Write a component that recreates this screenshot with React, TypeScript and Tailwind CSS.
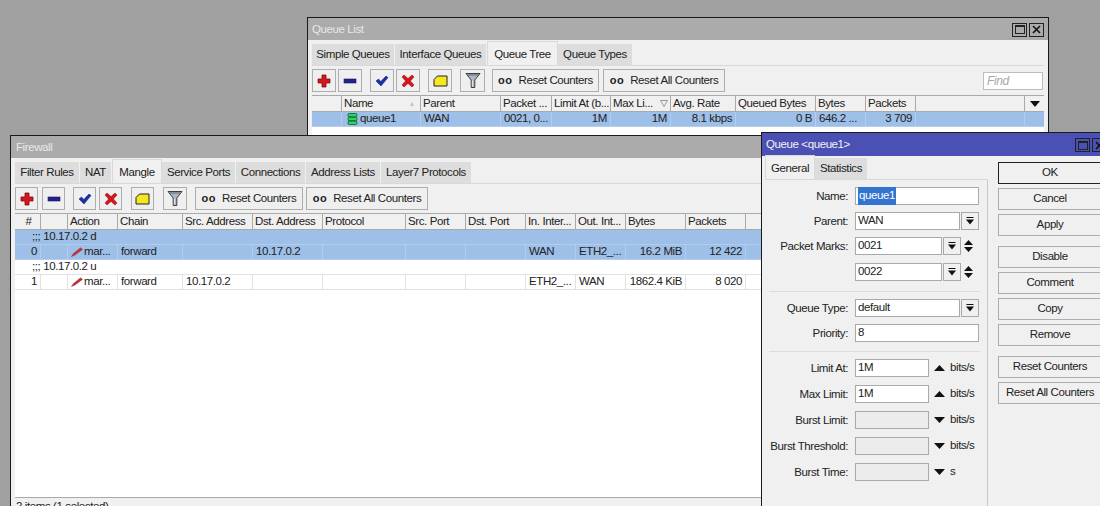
import type { ReactNode } from "react"

type Col = { w: number; label?: string; right?: boolean; center?: boolean }

const font = { fontFamily: '"Liberation Sans", Arial, sans-serif' }

function PlusIcon() {
  return (
    <svg width="14" height="14" viewBox="0 0 14 14">
      <path d="M5 1h4v4h4v4H9v4H5V9H1V5h4z" fill="#d8141c" stroke="#7a1015" strokeWidth="0.8" />
    </svg>
  )
}

function MinusIcon() {
  return (
    <svg width="14" height="14" viewBox="0 0 14 14">
      <rect x="1" y="5" width="12" height="4" fill="#23238e" stroke="#15155c" strokeWidth="0.6" />
    </svg>
  )
}

function CheckIcon() {
  return (
    <svg width="14" height="14" viewBox="0 0 14 14">
      <path d="M1 7l2.5-2 2.3 2.4L11 2l2 1.6L6 12z" fill="#1c2ea8" stroke="#101a66" strokeWidth="0.5" />
    </svg>
  )
}

function CrossIcon() {
  return (
    <svg width="14" height="14" viewBox="0 0 14 14">
      <path d="M1 3l2-2 4 3.6L11 1l2 2-3.6 4 3.6 4-2 2-4-3.6L3 13l-2-2 3.6-4z" fill="#d8141c" stroke="#7a1015" strokeWidth="0.5" />
    </svg>
  )
}

function NoteIcon() {
  return (
    <svg width="15" height="12" viewBox="0 0 15 12">
      <path d="M4.5 1h9.5v10H1V4.5z" fill="#f6e81e" stroke="#222" strokeWidth="1" />
    </svg>
  )
}

function FilterIcon() {
  return (
    <svg width="16" height="17" viewBox="0 0 16 17">
      <path d="M1 1.5h14L9.8 8v7.5H6.2V8z" fill="#aeb8c2" stroke="#3c3c3c" strokeWidth="1" />
      <path d="M3 3h10" stroke="#6f7c88" strokeWidth="1.4" />
      <path d="M7.4 8.5v6" stroke="#e4e8ec" strokeWidth="1" />
    </svg>
  )
}

function QueueIcon() {
  return (
    <svg width="11" height="12" viewBox="0 0 11 12" className="shrink-0">
      <rect x="1" y="0.5" width="9" height="3.4" rx="1.2" fill="#2fd368" stroke="#0b5a2a" strokeWidth="0.8" />
      <rect x="1" y="4.3" width="9" height="3.4" rx="1.2" fill="#2fd368" stroke="#0b5a2a" strokeWidth="0.8" />
      <rect x="1" y="8.1" width="9" height="3.4" rx="1.2" fill="#2fd368" stroke="#0b5a2a" strokeWidth="0.8" />
    </svg>
  )
}

function MarkIcon() {
  return (
    <svg width="12" height="10" viewBox="0 0 12 10" className="shrink-0">
      <path d="M0.5 9.5l2-3L9.5 0.8l2 1.6L4 8z" fill="#c8323c" stroke="#7a1a20" strokeWidth="0.4" />
    </svg>
  )
}

function ToolBtn({ w, ml = 0, children }: { w: number; ml?: number; children: ReactNode }) {
  return (
    <div
      className="flex h-[23px] shrink-0 items-center justify-center border border-[#adadad] bg-[#efefef] text-[11.5px] text-[#222]"
      style={{ width: w, marginLeft: ml }}
    >
      {children}
    </div>
  )
}

function ResetLabel({ text }: { text: string }) {
  return (
    <span className="flex items-center gap-[6px]">
      <b className="text-[11px] leading-none tracking-[0.5px]">oo</b>
      {text}
    </span>
  )
}

function Toolbar({ btn, gaps, resetW, resetAllW, children }: { btn: number; gaps: number[]; resetW: number; resetAllW: number; children?: ReactNode }) {
  return (
    <div className="flex h-[29px] items-center">
      <ToolBtn w={btn}><PlusIcon /></ToolBtn>
      <ToolBtn w={btn} ml={gaps[0]}><MinusIcon /></ToolBtn>
      <ToolBtn w={btn} ml={gaps[1]}><CheckIcon /></ToolBtn>
      <ToolBtn w={btn} ml={gaps[2]}><CrossIcon /></ToolBtn>
      <ToolBtn w={btn} ml={gaps[3]}><NoteIcon /></ToolBtn>
      <ToolBtn w={btn + 1} ml={gaps[4]}><FilterIcon /></ToolBtn>
      <ToolBtn w={resetW} ml={gaps[5]}><ResetLabel text="Reset Counters" /></ToolBtn>
      <ToolBtn w={resetAllW} ml={gaps[6]}><ResetLabel text="Reset All Counters" /></ToolBtn>
      {children}
    </div>
  )
}

function Tabs({ tabs, active, ml = 0 }: { tabs: [string, number][]; active: string; ml?: number }) {
  return (
    <div className="flex h-[24px] items-end border-b border-[#d9d9d9]" style={{ marginLeft: ml }}>
      {tabs.map(([name, w]) =>
        name === active ? (
          <div
            key={name}
            className="flex h-[24px] items-start justify-center border-x border-t border-[#d9d9d9] bg-[#f0f0f0] pt-[4px] text-[11.5px] text-[#222]"
            style={{ width: w }}
          >
            {name}
          </div>
        ) : (
          <div
            key={name}
            className="mr-[1px] flex h-[21px] items-center justify-center bg-[#dddddd] text-[11.5px] text-[#222]"
            style={{ width: w }}
          >
            {name}
          </div>
        ),
      )}
    </div>
  )
}

function HeaderCell({ col, children }: { col: Col; children?: ReactNode }) {
  return (
    <div
      className={`relative flex h-full shrink-0 items-center whitespace-nowrap border-r border-[#a9a9a9] pl-[2px] text-[11.5px] text-[#222] ${col.center ? "justify-center" : ""}`}
      style={{ width: col.w }}
    >
      {col.label}
      {children}
    </div>
  )
}

function Cell({ col, children, selected }: { col: Col; children?: ReactNode; selected?: boolean }) {
  return (
    <div
      className={`flex h-full shrink-0 items-center whitespace-nowrap border-r px-[3px] text-[11.5px] text-[#222] ${col.right ? "justify-end" : ""} ${selected ? "border-[#b4cdea]" : "border-[#e2e2e2]"}`}
      style={{ width: col.w }}
    >
      {children}
    </div>
  )
}

function Row({ cols, cells, selected }: { cols: Col[]; cells: ReactNode[]; selected?: boolean }) {
  return (
    <div className={`flex h-[15px] border-b ${selected ? "border-[#b4cdea] bg-[#9dbfe8]" : "border-[#e2e2e2] bg-white"}`}>
      {cols.map((c, i) => (
        <Cell key={i} col={c} selected={selected}>{cells[i]}</Cell>
      ))}
    </div>
  )
}

function CommentRow({ text, selected }: { text: string; selected?: boolean }) {
  return (
    <div className={`flex h-[15px] items-center border-b pl-[17px] text-[11.5px] text-[#222] ${selected ? "border-[#b4cdea] bg-[#9dbfe8]" : "border-[#e2e2e2] bg-white"}`}>
      {text}
    </div>
  )
}

function WinButtons() {
  return (
    <div className="flex items-center gap-[2px]">
      <div className="flex h-[14px] w-[15px] items-center justify-center border border-[#222]">
        <div className="h-[9px] w-[10px] border border-t-2 border-[#222]" />
      </div>
      <div className="flex h-[14px] w-[15px] items-center justify-center border border-[#222]">
        <svg width="9" height="9" viewBox="0 0 9 9">
          <path d="M1 1l7 7M8 1l-7 7" stroke="#111" strokeWidth="1.6" />
        </svg>
      </div>
    </div>
  )
}

const queueCols: Col[] = [
  { w: 30 }, { w: 79, label: "Name" }, { w: 80, label: "Parent" }, { w: 51, label: "Packet ..." },
  { w: 59, label: "Limit At (b...", right: true }, { w: 60, label: "Max Li...", right: true }, { w: 65, label: "Avg. Rate", right: true },
  { w: 80, label: "Queued Bytes", right: true }, { w: 50, label: "Bytes" }, { w: 50, label: "Packets", right: true }, { w: 109 },
]

const fwCols: Col[] = [
  { w: 26, label: "#", right: true, center: true }, { w: 27 }, { w: 50, label: "Action" }, { w: 65, label: "Chain" },
  { w: 70, label: "Src. Address" }, { w: 70, label: "Dst. Address" }, { w: 83, label: "Protocol" }, { w: 60, label: "Src. Port" },
  { w: 60, label: "Dst. Port" }, { w: 50, label: "In. Inter..." }, { w: 50, label: "Out. Int..." },
  { w: 60, label: "Bytes", right: true }, { w: 60, label: "Packets", right: true },
]

function QueueList() {
  return (
    <div className="absolute left-[307px] top-[17px] flex h-[130px] w-[742px] flex-col border border-[#1a1a1a] bg-[#f0f0f0]">
      <div className="flex h-[22px] items-center justify-between bg-[#ababab] pl-[4px] pr-[4px] pt-[1px] text-[11.5px] text-[#e8e8e8]">
        Queue List
        <WinButtons />
      </div>
      <div className="flex flex-1 flex-col px-[4px] pt-[2px]">
        <Tabs
          tabs={[["Simple Queues", 82], ["Interface Queues", 91], ["Queue Tree", 71], ["Queue Types", 74]]}
          active="Queue Tree"
        />
        <Toolbar btn={24} gaps={[2, 8, 2, 8, 8, 7, 4]} resetW={107} resetAllW={122}>
          <div className="ml-auto mr-[1px] flex h-[18px] w-[60px] items-center border border-[#bdbdbd] bg-white px-[3px] text-[12px] italic text-[#a8a8a8]">
            Find
          </div>
        </Toolbar>
        <div className="flex h-[17px] border-y border-[#a9a9a9] bg-[#f0f0f0]">
          {queueCols.map((c, i) => (
            <HeaderCell key={i} col={c}>
              {c.label === "Name" && <span className="absolute right-[5px] top-[3px] text-[7px] text-[#c4c4c4]">▲</span>}
              {c.label === "Max Li..." && (
                <svg width="8" height="7" viewBox="0 0 8 7" className="absolute right-[2px] top-[4px]">
                  <path d="M0.5 0.5h7L4 6.5z" fill="none" stroke="#999" />
                </svg>
              )}
            </HeaderCell>
          ))}
          <div className="relative flex-1">
            <svg width="10" height="6" viewBox="0 0 10 6" className="absolute right-[4px] top-[5px]">
              <path d="M0 0h10L5 6z" fill="#111" />
            </svg>
          </div>
        </div>
        <Row
          selected
          cols={queueCols}
          cells={[
            null,
            <span className="flex items-center gap-[2px] pl-[2px]"><QueueIcon />queue1</span>,
            "WAN", "0021, 0...", "1M", "1M", "8.1 kbps", "0 B", "646.2 ...", "3 709", null,
          ]}
        />
        <div className="flex-1 bg-white" />
      </div>
    </div>
  )
}

function Firewall() {
  return (
    <div className="absolute left-[10px] top-[135px] flex h-[380px] w-[760px] flex-col border border-[#1a1a1a] bg-[#f0f0f0]">
      <div className="flex h-[22px] items-center bg-[#ababab] pl-[5px] pt-[1px] text-[11.5px] text-[#e8e8e8]">Firewall</div>
      <div className="flex flex-1 flex-col pl-[4px] pt-[2px]">
        <Tabs
          tabs={[["Filter Rules", 64], ["NAT", 31], ["Mangle", 50], ["Service Ports", 73], ["Connections", 69], ["Address Lists", 74], ["Layer7 Protocols", 90]]}
          active="Mangle"
        />
        <Toolbar btn={23} gaps={[4, 8, 3, 9, 9, 8, 3]} resetW={108} resetAllW={122} />
        <div className="flex h-[17px] border-y border-[#a9a9a9] bg-[#f0f0f0]">
          {fwCols.map((c, i) => (
            <HeaderCell key={i} col={c} />
          ))}
        </div>
        <div className="flex flex-1 flex-col bg-white">
          <CommentRow selected text=";;; 10.17.0.2 d" />
          <Row
            selected
            cols={fwCols}
            cells={["0", null, <span className="flex items-center gap-[1px]"><MarkIcon />mar...</span>, "forward", null, "10.17.0.2", null, null, null, "WAN", "ETH2_...", "16.2 MiB", "12 422"]}
          />
          <CommentRow text=";;; 10.17.0.2 u" />
          <Row
            cols={fwCols}
            cells={["1", null, <span className="flex items-center gap-[1px]"><MarkIcon />mar...</span>, "forward", "10.17.0.2", null, null, null, null, "ETH2_...", "WAN", "1862.4 KiB", "8 020"]}
          />
        </div>
        <div className="h-[17px] border-t border-[#a9a9a9] pl-[1px] text-[11.5px] text-[#222]">2 items (1 selected)</div>
      </div>
    </div>
  )
}

function FormRow({ label, children }: { label?: string; children: ReactNode }) {
  return (
    <div className="flex h-[18px] items-center text-[11.5px] text-[#222]">
      <div className="w-[85px] shrink-0 whitespace-nowrap pr-[7px] pt-[1px] text-right">{label ? `${label}:` : ""}</div>
      {children}
    </div>
  )
}

function Input({ w, value, disabled, children }: { w: number; value?: string; disabled?: boolean; children?: ReactNode }) {
  return (
    <div
      className={`flex h-[18px] shrink-0 items-center border border-[#a9a9a9] pl-[2px] text-[11.5px] ${disabled ? "bg-[#ececec]" : "bg-white"}`}
      style={{ width: w }}
    >
      {value}
      {children}
    </div>
  )
}

function DropBtn() {
  return (
    <div className="ml-[1px] flex h-[18px] w-[18px] shrink-0 items-center justify-center border border-[#a9a9a9] bg-[#f0f0f0]">
      <svg width="8" height="8" viewBox="0 0 8 8">
        <path d="M0.5 0.5h7" stroke="#111" />
        <path d="M0 2.5h8L4 7.5z" fill="#111" />
      </svg>
    </div>
  )
}

function UpDown() {
  return (
    <svg width="9" height="12" viewBox="0 0 9 12" className="ml-[3px] shrink-0">
      <path d="M4.5 0L9 5H0zM0 7h9l-4.5 5z" fill="#111" />
    </svg>
  )
}

function Unit({ up, text }: { up?: boolean; text: string }) {
  return (
    <span className="ml-[5px] flex items-center gap-[5px]">
      <svg width="11" height="6" viewBox="0 0 11 6">
        <path d={up ? "M5.5 0L11 6H0z" : "M0 0h11L5.5 6z"} fill="#111" />
      </svg>
      {text}
    </span>
  )
}

function Separator() {
  return <div className="ml-[7px] mr-[7px] h-px bg-[#dcdcdc]" />
}

function DlgButton({ text, mt = 4, focus }: { text: string; mt?: number; focus?: boolean }) {
  return (
    <div
      className={`flex h-[22px] w-[104px] items-center justify-center whitespace-nowrap border bg-[#f0f0f0] text-[11.5px] text-[#222] ${focus ? "border-[#222]" : "border-[#adadad]"}`}
      style={{ marginTop: mt }}
    >
      {text}
    </div>
  )
}

function QueueDialog() {
  return (
    <div className="absolute left-[761px] top-[132px] flex h-[380px] w-[347px] flex-col border border-[#1a1a1a] bg-[#f0f0f0]">
      <div className="flex h-[23px] items-center justify-between bg-[#4b50b4] pl-[4px] pt-[1px] text-[11.5px] text-[#f2f2f2]">
        {"Queue <queue1>"}
        <WinButtons />
      </div>
      <div className="flex flex-1">
        <div className="flex w-[226px] flex-col">
          <Tabs tabs={[["General", 50], ["Statistics", 52]]} active="General" ml={3} />
          <div className="flex flex-1 flex-col border-r border-[#c9c9c9] pt-[7px]">
            <div className="flex flex-col pl-[8px]">
              <FormRow label="Name">
                <Input w={124}><span className="bg-[#3374d0] px-[1px] text-white">queue1</span></Input>
              </FormRow>
              <div className="mt-[7px]"><FormRow label="Parent"><Input w={105} value="WAN" /><DropBtn /></FormRow></div>
              <div className="mt-[7px]"><FormRow label="Packet Marks"><Input w={87} value="0021" /><DropBtn /><UpDown /></FormRow></div>
              <div className="mt-[8px]"><FormRow><Input w={87} value="0022" /><DropBtn /><UpDown /></FormRow></div>
            </div>
            <div className="mt-[10px]"><Separator /></div>
            <div className="mt-[7px] flex flex-col gap-[7px] pl-[8px]">
              <FormRow label="Queue Type"><Input w={105} value="default" /><DropBtn /></FormRow>
              <FormRow label="Priority"><Input w={124} value="8" /></FormRow>
            </div>
            <div className="mt-[9px]"><Separator /></div>
            <div className="mt-[7px] flex flex-col gap-[8px] pl-[8px]">
              <FormRow label="Limit At"><Input w={74} value="1M" /><Unit up text="bits/s" /></FormRow>
              <FormRow label="Max Limit"><Input w={74} value="1M" /><Unit up text="bits/s" /></FormRow>
              <FormRow label="Burst Limit"><Input w={74} disabled /><Unit text="bits/s" /></FormRow>
              <FormRow label="Burst Threshold"><Input w={74} disabled /><Unit text="bits/s" /></FormRow>
              <FormRow label="Burst Time"><Input w={74} disabled /><Unit text="s" /></FormRow>
            </div>
          </div>
        </div>
        <div className="ml-[10px] flex flex-col pt-[6px]">
          <DlgButton text="OK" mt={0} focus />
          <DlgButton text="Cancel" />
          <DlgButton text="Apply" />
          <DlgButton text="Disable" mt={10} />
          <DlgButton text="Comment" />
          <DlgButton text="Copy" />
          <DlgButton text="Remove" />
          <DlgButton text="Reset Counters" mt={10} />
          <DlgButton text="Reset All Counters" />
        </div>
      </div>
    </div>
  )
}

export default function App() {
  return (
    <div className="relative h-[506px] w-[1100px] overflow-hidden bg-[#a0a0a0] tracking-[-0.4px]" style={font}>
      <QueueList />
      <Firewall />
      <QueueDialog />
    </div>
  )
}
